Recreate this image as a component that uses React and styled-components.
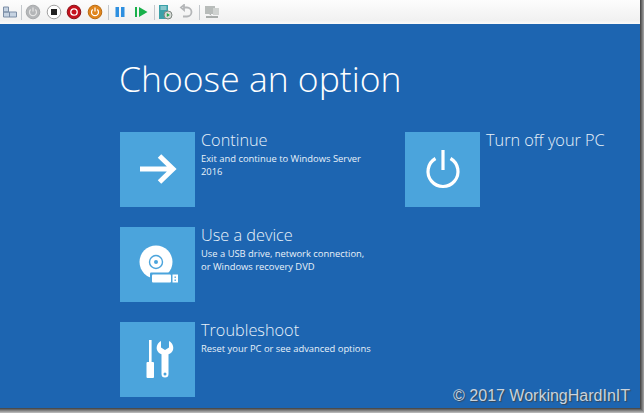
import React from 'react';
import styled, { createGlobalStyle } from 'styled-components';

const GlobalStyle = createGlobalStyle`
  html, body {
    margin: 0;
    padding: 0;
    background: #ddd;
  }
  #root {
    width: 644px;
    height: 413px;
    overflow: hidden;
  }
`;

// the dark edge on the right and at the bottom is the screenshot's drop shadow
const Page = styled.div`
  width: 640px;
  height: 408px;
  display: flex;
  flex-direction: column;
  font-family: "Open Sans", "Liberation Sans", sans-serif;
  box-shadow:
    0 0 0 1px #4c4c4c,
    0 0 0 2px #666,
    0 0 0 3px #808080,
    0 0 0 4px #9a9a9a,
    0 0 0 5px #b4b4b4;
`;

const Toolbar = styled.div`
  height: 24px;
  flex: none;
  display: flex;
  align-items: center;
  padding-left: 2px;
  box-sizing: border-box;
  background: linear-gradient(#fdfdfd, #f1f1f1 85%, #fafafa);
`;

const ToolIcon = styled.svg`
  width: 16px;
  height: 16px;
  flex: none;
  margin-left: ${(p) => p.$gap || 0}px;
  filter: blur(0.3px);
`;

const Divider = styled.div`
  width: 1px;
  height: 15px;
  flex: none;
  margin-left: ${(p) => p.$gap || 0}px;
  background: #c4c8cc;
`;

const Screen = styled.main`
  flex: 1;
  box-sizing: border-box;
  position: relative;
  padding: 31px 0 0 120px;
  background: #1d65b1;
  color: #fff;
`;

const Title = styled.h1`
  margin: 0 0 30px -1px;
  font-size: 35.5px;
  line-height: 47px;
  font-weight: 300;
  letter-spacing: 0;
`;

const Columns = styled.div`
  display: grid;
  grid-template-columns: 285px 1fr;
`;

const Column = styled.div`
  display: flex;
  flex-direction: column;
  gap: 20px;
`;

const Option = styled.div`
  display: flex;
  gap: 6px;
  height: 75px;
`;

const Tile = styled.div`
  width: 75px;
  height: 75px;
  flex: none;
  display: flex;
  align-items: center;
  justify-content: center;
  background: #4ba4dc;
`;

const TileIcon = styled.svg`
  overflow: visible;
  display: block;
`;

const OptionBody = styled.div`
  display: flex;
  flex-direction: column;
  color: #e8f1f9;
`;

const OptionTitle = styled.div`
  font-size: 16.3px;
  line-height: 16px;
  font-weight: 300;
  margin-bottom: 4px;
`;

const OptionText = styled.div`
  font-size: 9.4px;
  line-height: 13px;
  width: 170px;
`;

const Copyright = styled.div`
  position: absolute;
  right: 10px;
  bottom: 3px;
  font-family: "Liberation Sans", Arial, sans-serif;
  font-size: 16px;
  line-height: 18px;
  color: #c9d3dc;
  text-shadow: 1px 1px 1px #3a4652;
`;

const ArrowIcon = () => (
  <TileIcon width="38" height="30" viewBox="0 1 38 30">
    <path d="M1 15H33M20.500 2l13.500 13-13.500 13" fill="none" stroke="#fff" strokeWidth="5" />
  </TileIcon>
);

const DeviceIcon = () => (
  <TileIcon width="42" height="42" viewBox="-2 -1 42 42">
    <circle cx="17" cy="17" r="16.500" fill="#fff" />
    <circle cx="17" cy="17" r="6.500" fill="none" stroke="#4ba4dc" strokeWidth="1.400" />
    <circle cx="17" cy="17" r="2" fill="#4ba4dc" />
    <rect x="11" y="27.500" width="22" height="12" rx="1" fill="#4ba4dc" />
    <rect x="13" y="29.500" width="19" height="8" rx="1" fill="#fff" />
    <rect x="33.500" y="29.500" width="5.500" height="8" fill="#fff" />
    <rect x="35.500" y="31.500" width="1.400" height="1.400" fill="#4ba4dc" />
    <rect x="35.500" y="34.500" width="1.400" height="1.400" fill="#4ba4dc" />
  </TileIcon>
);

const ToolsIcon = () => (
  <TileIcon width="34" height="38" viewBox="0 1 34 38">
    <rect x="8" y="0" width="2.600" height="22" fill="#fff" />
    <rect x="5.500" y="22" width="7.500" height="16" rx="1" fill="#fff" />
    <path
      d="M20 1C16.500 3 15 6.500 16 10c.7 2 2 3.300 4.500 4.300V34a3.500 3.500 0 0 0 7 0V14.300c2.500-1 3.800-2.300 4.500-4.300C33 6.500 31.500 3 28 1V7.500L24 10l-4-2.500z"
      fill="#fff"
    />
    <circle cx="24" cy="34" r="1.500" fill="#4ba4dc" />
  </TileIcon>
);

const PowerIcon = () => (
  <TileIcon width="36" height="40" viewBox="0 1 36 40">
    <path d="M18 1v20" stroke="#fff" strokeWidth="3.200" fill="none" />
    <path d="M10.500 9.500a15 15 0 1 0 15 0" stroke="#fff" strokeWidth="3.200" fill="none" />
  </TileIcon>
);

const RoundButton = ({ gap, fill, ring, children }) => (
  <ToolIcon $gap={gap} viewBox="0 0 16 16">
    <circle cx="8" cy="8" r="6.800" fill={fill} stroke={ring} strokeWidth="1" />
    {children}
  </ToolIcon>
);

const Glyph = ({ color }) => (
  <g fill="none" stroke={color} strokeWidth="1.200">
    <path d="M8 3.500v4" />
    <path d="M5.700 5.500a3.500 3.500 0 1 0 4.600 0" />
  </g>
);

const options = [
  { title: 'Continue', text: 'Exit and continue to Windows Server 2016', icon: <ArrowIcon /> },
  { title: 'Use a device', text: 'Use a USB drive, network connection, or Windows recovery DVD', icon: <DeviceIcon /> },
  { title: 'Troubleshoot', text: 'Reset your PC or see advanced options', icon: <ToolsIcon /> },
];

const OptionRow = ({ title, text, icon }) => (
  <Option>
    <Tile>{icon}</Tile>
    <OptionBody>
      <OptionTitle>{title}</OptionTitle>
      {text && <OptionText>{text}</OptionText>}
    </OptionBody>
  </Option>
);

export default function App() {
  return (
    <>
      <GlobalStyle />
      <Page>
        <Toolbar>
          <ToolIcon viewBox="0 0 16 16">
            <path d="M1.500 3h5v5h-5zM1.500 8h13v5h-13zM7.500 8v5" fill="#c6d3e2" stroke="#7c8ea6" />
          </ToolIcon>
          <Divider $gap={3} />
          <RoundButton gap={3} fill="#b4b6b8" ring="#a6a8aa"><Glyph color="#e4e4e4" /></RoundButton>
          <RoundButton gap={5} fill="#fff" ring="#a0a0a0">
            <rect x="5" y="5" width="6" height="6" fill="#222" />
          </RoundButton>
          <RoundButton gap={4} fill="#c4101c" ring="#8a1016">
            <circle cx="8" cy="8" r="3.200" fill="none" stroke="#fff" strokeWidth="1.300" />
          </RoundButton>
          <RoundButton gap={5} fill="#e0851c" ring="#b96a12"><Glyph color="#fff" /></RoundButton>
          <Divider $gap={5} />
          <ToolIcon $gap={3} viewBox="0 0 16 16">
            <path d="M3.500 3h3.500v10H3.500zM9 3h3.500v10H9z" fill="#2d8fe0" />
          </ToolIcon>
          <ToolIcon $gap={5} viewBox="0 0 16 16">
            <path d="M2 3h2v10H2zM6 3L14.500 8 6 13z" fill="#18b04a" />
          </ToolIcon>
          <Divider $gap={5} />
          <ToolIcon $gap={2} viewBox="0 0 16 16">
            <path d="M2 1h9v14H2z" fill="#3aa0a8" />
            <path d="M3.500 3h6M3.500 5h6" stroke="#d5eef0" />
            <circle cx="11" cy="11" r="4" fill="#d8dcd8" stroke="#7d8580" />
            <path d="M9.800 9l3 2-3 2z" fill="#1fa84a" />
          </ToolIcon>
          <ToolIcon $gap={5} viewBox="0 0 16 16">
            <path d="M6 3.500h3a4.500 4.500 0 0 1 0 9H5M6 1v5L3 3.500z" fill="none" stroke="#b4b6b8" strokeWidth="1.800" />
          </ToolIcon>
          <Divider $gap={5} />
          <ToolIcon $gap={4} viewBox="0 0 16 16">
            <path d="M1 2h10v8H1z" fill="#b8bcba" />
            <path d="M9 4h6v7H9z" fill="#cfd2d0" />
            <path d="M5 10h2v2H2v2h12v-2H8" fill="#a8acaa" />
          </ToolIcon>
        </Toolbar>
        <Screen>
          <Title>Choose an option</Title>
          <Columns>
            <Column>
              {options.map((o) => (
                <OptionRow key={o.title} {...o} />
              ))}
            </Column>
            <Column>
              <OptionRow title="Turn off your PC" icon={<PowerIcon />} />
            </Column>
          </Columns>
          <Copyright>© 2017 WorkingHardInIT</Copyright>
        </Screen>
      </Page>
    </>
  );
}
